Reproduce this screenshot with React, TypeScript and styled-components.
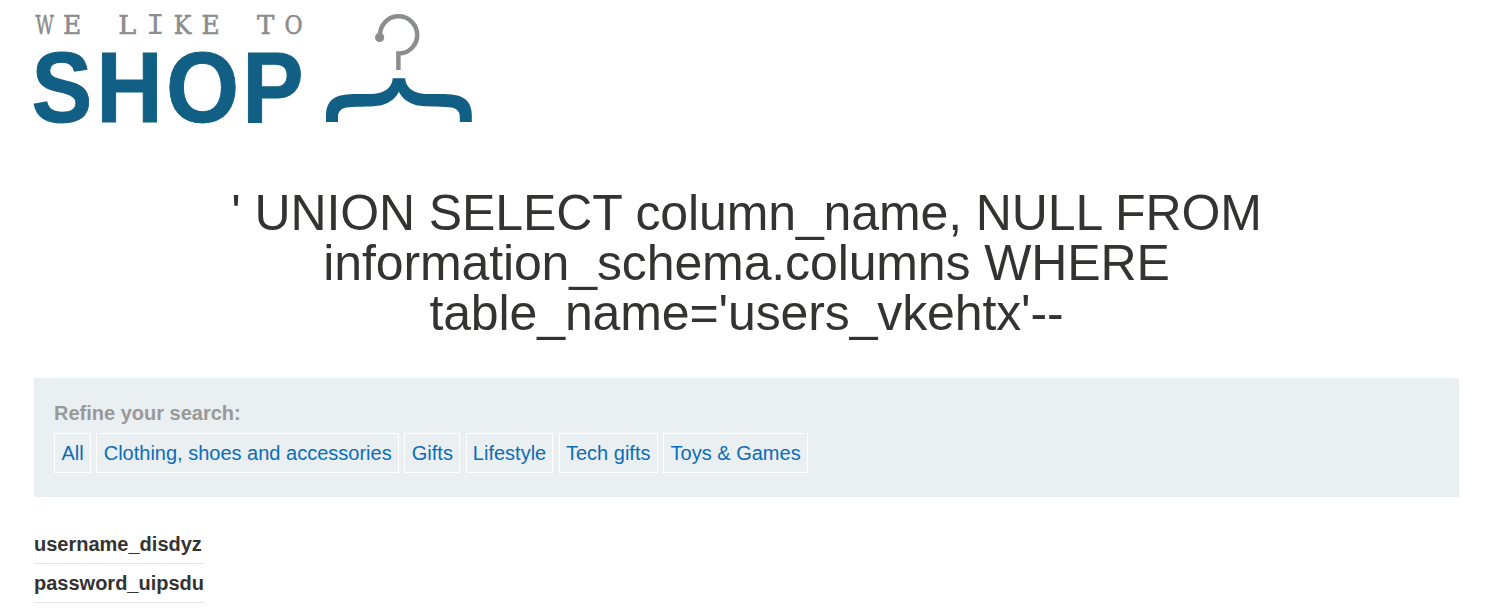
import React from "react";
import styled, { createGlobalStyle } from "styled-components";

const GlobalStyle = createGlobalStyle`
  *, *::before, *::after { box-sizing: border-box; }
  body {
    margin: 0;
    background: #fff;
    color: #333332;
    font-family: Arial, "Liberation Sans", sans-serif;
    font-size: 20px;
    overflow: hidden;
  }
`;

const Page = styled.main`
  display: flex;
  flex-direction: column;
  align-items: stretch;
  height: 614px;
  padding: 0 27px 0 34px;
  overflow: hidden;
`;

const LogoDrawing = styled.svg`
  display: block;
  flex: none;
  width: 440px;
  height: 150px;
  overflow: visible;
`;

const Tagline = styled.g`
  fill: #8c8d8e;
  stroke: #8c8d8e;
  stroke-width: 0.6px;
  text-anchor: middle;
  font-family: "DejaVu Serif", serif;
  font-size: 25.5px;
`;

const TaglineMono = styled.text`
  font-family: "Liberation Mono", monospace;
  font-size: 28.8px;
  stroke: none;
`;

const Wordmark = styled.g`
  fill: #115f84;
  stroke: #115f84;
  stroke-width: 1px;
  font-family: "Liberation Sans", Arial, sans-serif;
  font-weight: 700;
  font-size: 100px;
`;

const Heading = styled.h1`
  align-self: center;
  width: 1100px;
  margin: 38px 0 40px;
  font-size: 50px;
  line-height: 50px;
  letter-spacing: -0.12px;
  font-weight: 400;
  text-align: center;
`;

const Filters = styled.section`
  flex: none;
  height: 119px;
  padding: 20px;
  background: #eaeff2;
`;

const FilterLabel = styled.div`
  height: 35px;
  line-height: 30px;
  font-weight: 700;
  color: #999;
`;

const FilterList = styled.nav`
  display: flex;
  gap: 5.4px;
`;

const FilterLink = styled.a<{ $width: number }>`
  display: flex;
  justify-content: center;
  width: ${(p) => p.$width}px;
  height: 40px;
  border: 1px solid #fff;
  line-height: 38px;
  color: #0b6cb8;
  text-decoration: none;
  white-space: nowrap;
`;

const Results = styled.div`
  align-self: flex-start;
  width: 170px;
  margin-top: 28px;
`;

const ResultRow = styled.div`
  height: 39px;
  border-bottom: 1px solid #e5e5e5;
  line-height: 38px;
  font-weight: 700;
  white-space: nowrap;
`;

type Letter = { ch: string; x: number; scale: number; mono?: boolean };

const taglineLetters: Letter[] = [
  { ch: "W", x: 44.7, scale: 0.7 },
  { ch: "E", x: 72.2, scale: 0.98 },
  { ch: "L", x: 127.3, scale: 1.06 },
  { ch: "I", x: 155.3, scale: 1.08, mono: true },
  { ch: "K", x: 182.4, scale: 0.92 },
  { ch: "E", x: 210.5, scale: 0.98 },
  { ch: "T", x: 265.8, scale: 1.02 },
  { ch: "O", x: 293.6, scale: 0.87 },
];

const wordmarkLetters: Letter[] = [
  { ch: "S", x: 31.4, scale: 0.91 },
  { ch: "H", x: 96.2, scale: 0.92 },
  { ch: "O", x: 166, scale: 0.94 },
  { ch: "P", x: 242.2, scale: 0.92 },
];

const filters = [
  { label: "All", width: 37 },
  { label: "Clothing, shoes and accessories", width: 302.6 },
  { label: "Gifts", width: 56 },
  { label: "Lifestyle", width: 87.5 },
  { label: "Tech gifts", width: 99.2 },
  { label: "Toys & Games", width: 144.8 },
];
const results = ["username_disdyz", "password_uipsdu"];

const bracketArm =
  "M252 235H233C232 260 212 278 180 281C140 284 110 280 85 285C50 290 34 310 33 345V366H69V350C69 330 84 321 112 321C150 319 184 320 204 314C226 308 246 292 252 274Z";

function Logo() {
  return (
    <LogoDrawing viewBox="34 0 440 150" role="img" aria-label="We like to shop">
      <Tagline>
        {taglineLetters.map((l, i) => {
          const place = `translate(${l.x} 33.8) scale(${l.scale} 1)`;
          return l.mono ? (
            <TaglineMono key={i} transform={place}>{l.ch}</TaglineMono>
          ) : (
            <text key={i} transform={place}>{l.ch}</text>
          );
        })}
      </Tagline>
      <Wordmark>
        {wordmarkLetters.map((l) => (
          <text key={l.ch} transform={`translate(${l.x} 122.2) scale(${l.scale} 1)`}>{l.ch}</text>
        ))}
      </Wordmark>
      <path d="M380.1 36.5 A18.6 18.6 0 1 1 398.4 53.5 L398.4 70" fill="none" stroke="#8c8d8e" strokeWidth="4.5" />
      <circle cx="379.6" cy="37.4" r="4.6" fill="#8c8d8e" />
      <g transform="translate(315 0) scale(0.33333)" fill="#115f84">
        <path d={bracketArm} />
        <path d={bracketArm} transform="translate(503.5 0) scale(-1 1)" />
      </g>
    </LogoDrawing>
  );
}

export default function App() {
  return (
    <>
      <GlobalStyle />
      <Page>
        <Logo />
        <Heading>
          ' UNION SELECT column_name, NULL FROM information_schema.columns WHERE table_name='users_vkehtx'--
        </Heading>
        <Filters>
          <FilterLabel>Refine your search:</FilterLabel>
          <FilterList>
            {filters.map((f) => (
              <FilterLink key={f.label} $width={f.width}>{f.label}</FilterLink>
            ))}
          </FilterList>
        </Filters>
        <Results>
          {results.map((r) => (
            <ResultRow key={r}>{r}</ResultRow>
          ))}
        </Results>
      </Page>
    </>
  );
}
